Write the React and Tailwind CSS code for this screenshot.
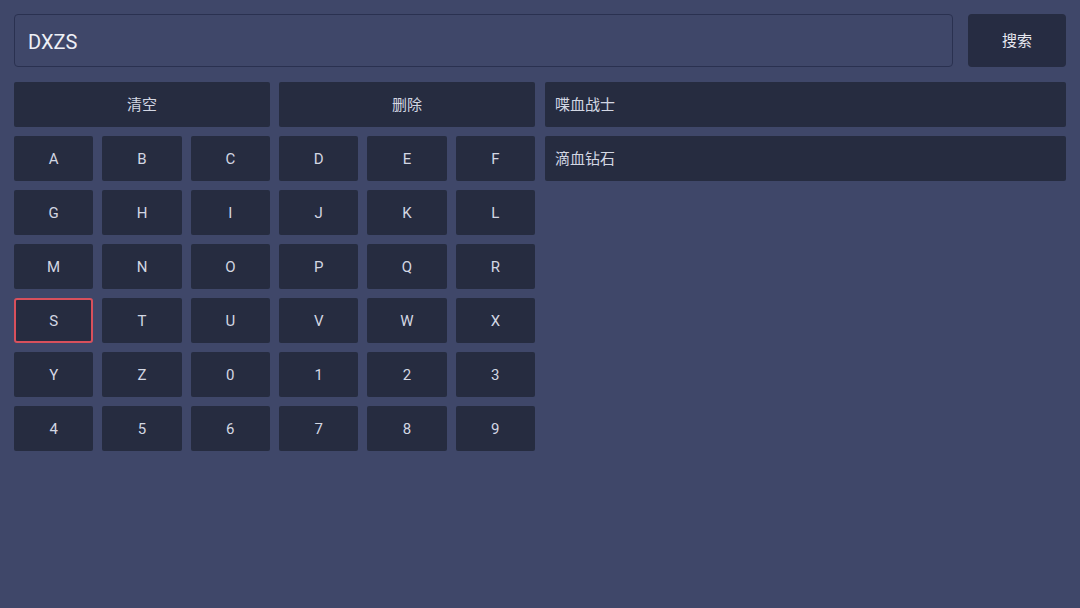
import { useState } from 'react'

const KEYS = 'ABCDEFGHIJKLMNOPQRSTUVWXYZ0123456789'.split('')
const RESULTS = ['喋血战士', '滴血钻石']

const font = { fontFamily: 'Roboto, "Noto Sans CJK SC", sans-serif' }

export default function App() {
  const [query, setQuery] = useState('DXZS')
  const [focused, setFocused] = useState('S')

  return (
    <div className="w-[1080px] h-[608px] bg-[#3f4769] px-[14px] pt-[14px] text-[#d3d7e3]" style={font}>
      <div className="flex gap-[15px] h-[53px]">
        <div className="flex-1 flex items-center rounded-[4px] border border-[#2a3150] bg-[#3f4769] px-[13px] pt-[2px]">
          <span className="text-[20px] text-[#eef0f6]">{query}</span>
        </div>
        <button className="w-[98px] rounded-[4px] bg-[#262c42] pt-[2px] text-[15px] text-[#e6e8f0]">
          搜索
        </button>
      </div>

      <div className="flex gap-[10px] mt-[15px]">
        <div className="w-[521px] grid grid-cols-6 gap-[9px] auto-rows-[45px]">
          <button
            onClick={() => setQuery('')}
            className="col-span-3 rounded-[2px] bg-[#262c40] pt-[2px] text-[15px]"
          >
            清空
          </button>
          <button
            onClick={() => setQuery(query.slice(0, -1))}
            className="col-span-3 rounded-[2px] bg-[#262c40] pt-[2px] text-[15px]"
          >
            删除
          </button>
          {KEYS.map((k) => (
            <button
              key={k}
              onClick={() => {
                setFocused(k)
                setQuery(query + k)
              }}
              className={
                k === focused
                  ? 'rounded-[3px] bg-[#262c40] border-2 border-[#d8505c] pt-[2px] text-[15px]'
                  : 'rounded-[2px] bg-[#262c40] pt-[2px] text-[15px]'
              }
            >
              {k}
            </button>
          ))}
        </div>

        <div className="w-[521px] flex flex-col gap-[9px]">
          {RESULTS.map((r) => (
            <div
              key={r}
              className="h-[45px] flex items-center rounded-[2px] bg-[#262c40] px-[10px] pt-[2px] text-[15px]"
            >
              {r}
            </div>
          ))}
        </div>
      </div>
    </div>
  )
}
